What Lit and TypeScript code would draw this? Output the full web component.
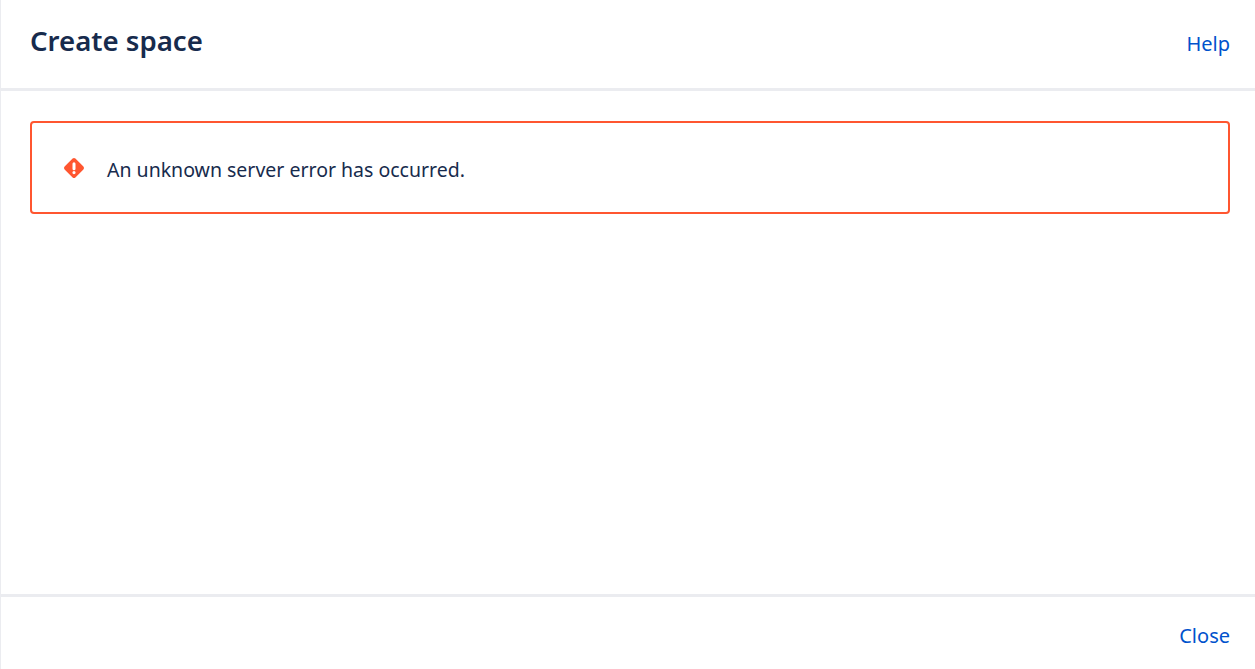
import { LitElement, html, css } from "lit";
import { customElement } from "lit/decorators.js";

@customElement("app-root")
export class AppRoot extends LitElement {
  static styles = css`
    :host {
      display: flex;
      flex-direction: column;
      height: 669px;
      box-sizing: border-box;
      border-left: 1px solid #ebecf0;
      background: #fff;
      font-family: "Noto Sans", "Open Sans", sans-serif;
      color: #172b4d;
      overflow: hidden;
    }
    a { color: #0052cc; text-decoration: none; font-size: 20px; }
    .header {
      display: flex;
      justify-content: space-between;
      align-items: center;
      height: 91px;
      box-sizing: border-box;
      padding: 0 25px 0 29px;
      border-bottom: 3px solid #ebecf0;
      flex: none;
    }
    h1 { margin: 0 0 9px; font-size: 27.6px; font-weight: 600; color: #172b4d; }
    .help { padding-bottom: 2px; }
    .body { flex: 1; padding: 30px 25px 0 29px; }
    .error {
      display: flex;
      align-items: center;
      gap: 21.5px;
      height: 93px;
      box-sizing: border-box;
      border: 2px solid #ff5630;
      border-radius: 4px;
      padding: 0 29.5px;
      font-size: 19.5px;
    }
    .message { padding-top: 4px; }
    svg { width: 24px; height: 24px; flex: none; }
    .footer {
      display: flex;
      justify-content: flex-end;
      align-items: center;
      height: 75px;
      flex: none;
      box-sizing: border-box;
      padding: 0 25px 0 29px;
      border-top: 3px solid #ebecf0;
    }
    .close { padding-top: 4px; }
  `;

  render() {
    return html`
      <div class="header"><h1>Create space</h1><a class="help" href="#">Help</a></div>
      <div class="body">
        <div class="error">
          <svg viewBox="0 0 24 24"><path fill="#ff5630" fill-rule="evenodd" d="M13.4 2.6l8 8a2 2 0 010 2.8l-8 8a2 2 0 01-2.8 0l-8-8a2 2 0 010-2.8l8-8a2 2 0 012.8 0zM12 6.2a1.5 1.5 0 00-1.5 1.5v5a1.5 1.5 0 003 0v-5A1.5 1.5 0 0012 6.2zm0 8.8a1.6 1.6 0 100 3.2 1.6 1.6 0 000-3.2z"/></svg>
          <span class="message">An unknown server error has occurred.</span>
        </div>
      </div>
      <div class="footer"><a class="close" href="#">Close</a></div>
    `;
  }
}
